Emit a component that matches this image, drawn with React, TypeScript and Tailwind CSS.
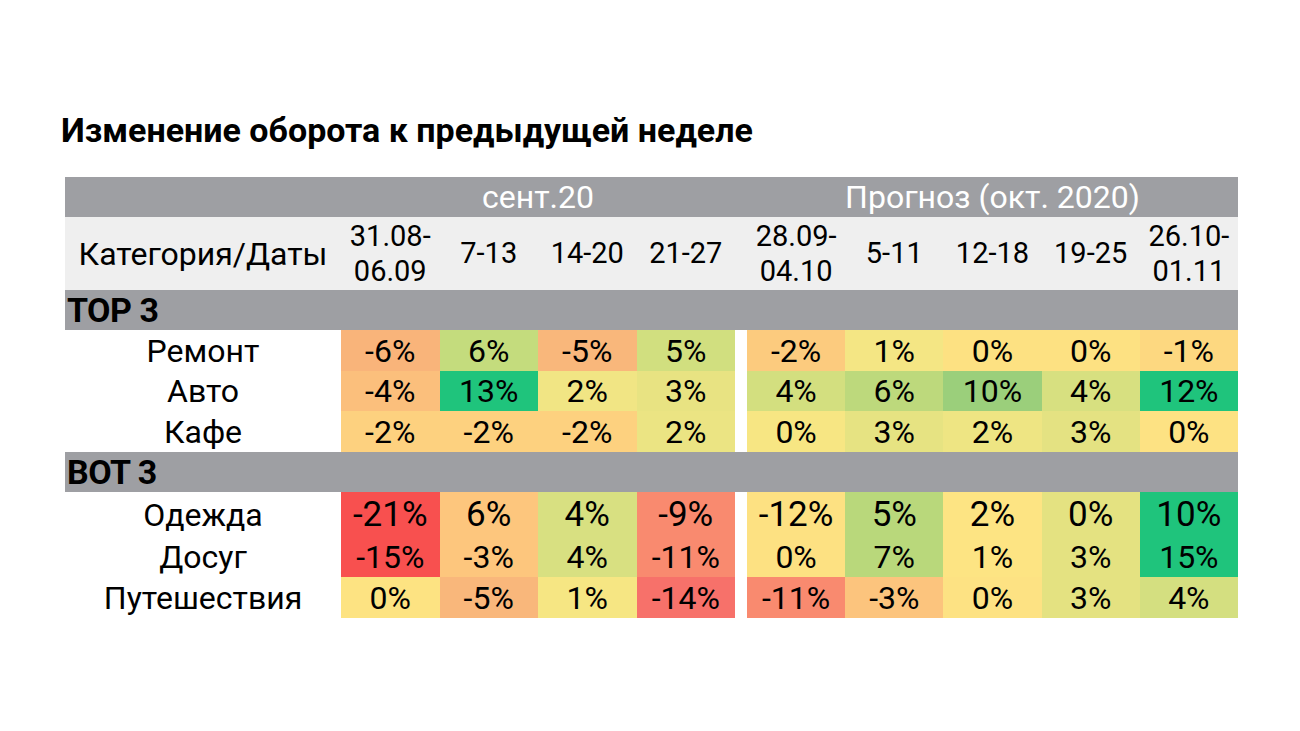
import React from "react";

type Cell = [string, string];

interface Row {
  label: string;
  big?: boolean;
  h: string;
  sept: Cell[];
  oct: Cell[];
}

const GRID =
  "grid grid-cols-[276px_repeat(4,98.5px)_12px_repeat(5,98.2px)]";

const top3: Row[] = [
  {
    label: "Ремонт",
    h: "h-[41px]",
    sept: [["-6%", "#f9b47a"], ["6%", "#c4dc7d"], ["-5%", "#f9b77b"], ["5%", "#d1df7f"]],
    oct: [["-2%", "#fccb7e"], ["1%", "#f4e684"], ["0%", "#fde182"], ["0%", "#fde182"], ["-1%", "#fdd880"]],
  },
  {
    label: "Авто",
    h: "h-[40px]",
    sept: [["-4%", "#fbbf7c"], ["13%", "#1fc47c"], ["2%", "#f1e584"], ["3%", "#e8e382"]],
    oct: [["4%", "#d3df7f"], ["6%", "#bdd97c"], ["10%", "#9bcf7b"], ["4%", "#d7e080"], ["12%", "#1fc47c"]],
  },
  {
    label: "Кафе",
    h: "h-[41px]",
    sept: [["-2%", "#fdd17f"], ["-2%", "#fdd17f"], ["-2%", "#fdd17f"], ["2%", "#ebe483"]],
    oct: [["0%", "#f7e683"], ["3%", "#e6e382"], ["2%", "#eee583"], ["3%", "#e4e282"], ["0%", "#fde283"]],
  },
];

const bot3: Row[] = [
  {
    label: "Одежда",
    big: true,
    h: "h-[45px]",
    sept: [["-21%", "#f8504f"], ["6%", "#fdc67d"], ["4%", "#d8e081"], ["-9%", "#f98a6f"]],
    oct: [["-12%", "#fde182"], ["5%", "#b9d87b"], ["2%", "#fde483"], ["0%", "#e4e281"], ["10%", "#1fc47c"]],
  },
  {
    label: "Досуг",
    h: "h-[40px]",
    sept: [["-15%", "#f8504f"], ["-3%", "#fdc67d"], ["4%", "#d8e081"], ["-11%", "#f98a6f"]],
    oct: [["0%", "#fde182"], ["7%", "#b9d87b"], ["1%", "#fde483"], ["3%", "#e4e281"], ["15%", "#1fc47c"]],
  },
  {
    label: "Путешествия",
    h: "h-[41px]",
    sept: [["0%", "#fde382"], ["-5%", "#f9b77b"], ["1%", "#f6e683"], ["-14%", "#f7716a"]],
    oct: [["-11%", "#f98a6f"], ["-3%", "#fcc47d"], ["0%", "#fde283"], ["3%", "#e4e281"], ["4%", "#d4df80"]],
  },
];

function DataRow({ row }: { row: Row }) {
  // the "Одежда" row uses a larger font for its values in the original
  const size = row.big ? "text-[35px]" : "text-[32px]";
  return (
    <div className={`${GRID} ${row.h} leading-none text-black`}>
      <div className="flex items-center justify-center bg-white text-[32px]">{row.label}</div>
      {row.sept.map(([v, c], i) => (
        <div key={i} className={`flex items-center justify-center ${size}`} style={{ backgroundColor: c }}>
          {v}
        </div>
      ))}
      <div className="bg-white" />
      {row.oct.map(([v, c], i) => (
        <div key={i} className={`flex items-center justify-center ${size}`} style={{ backgroundColor: c }}>
          {v}
        </div>
      ))}
    </div>
  );
}

function GroupRow({ title }: { title: string }) {
  return (
    <div className="flex h-10 items-center bg-[#9e9fa3] pl-[2px] text-[34px] font-bold leading-none tracking-[-0.5px] text-black">
      {title}
    </div>
  );
}

const septDates = [["31.08-", "06.09"], ["7-13"], ["14-20"], ["21-27"]];
const octDates = [["28.09-", "04.10"], ["5-11"], ["12-18"], ["19-25"], ["26.10-", "01.11"]];

function DateCell({ lines }: { lines: string[] }) {
  return (
    <div className="flex flex-col items-center justify-center text-[29px] leading-[35px]">
      {lines.map((l) => (
        <span key={l}>{l}</span>
      ))}
    </div>
  );
}

export default function App() {
  return (
    <div className="min-h-[731px] w-[1300px] bg-white font-['Roboto',sans-serif]">
      <div className="pl-[61px] pt-[110px]">
        <h1 className="text-[34px] font-bold leading-[40px] text-black">
          Изменение оборота к предыдущей неделе
        </h1>
      </div>
      <div className="ml-[65px] mt-[27px] w-[1173px]">
        <div className={`${GRID} h-10 bg-[#9e9fa3] text-[32px] leading-none text-white`}>
          <div />
          <div className="col-span-4 flex items-center justify-center">сент.20</div>
          <div />
          <div className="col-span-5 flex items-center justify-center">Прогноз (окт. 2020)</div>
        </div>
        <div className={`${GRID} h-[73px] bg-[#efefef] text-black`}>
          <div className="flex items-center justify-center text-[32px]">Категория/Даты</div>
          {septDates.map((d, i) => (
            <DateCell key={i} lines={d} />
          ))}
          <div />
          {octDates.map((d, i) => (
            <DateCell key={i} lines={d} />
          ))}
        </div>
        <GroupRow title="TOP 3" />
        {top3.map((r) => (
          <DataRow key={r.label} row={r} />
        ))}
        <GroupRow title="BOT 3" />
        {bot3.map((r) => (
          <DataRow key={r.label} row={r} />
        ))}
      </div>
    </div>
  );
}
